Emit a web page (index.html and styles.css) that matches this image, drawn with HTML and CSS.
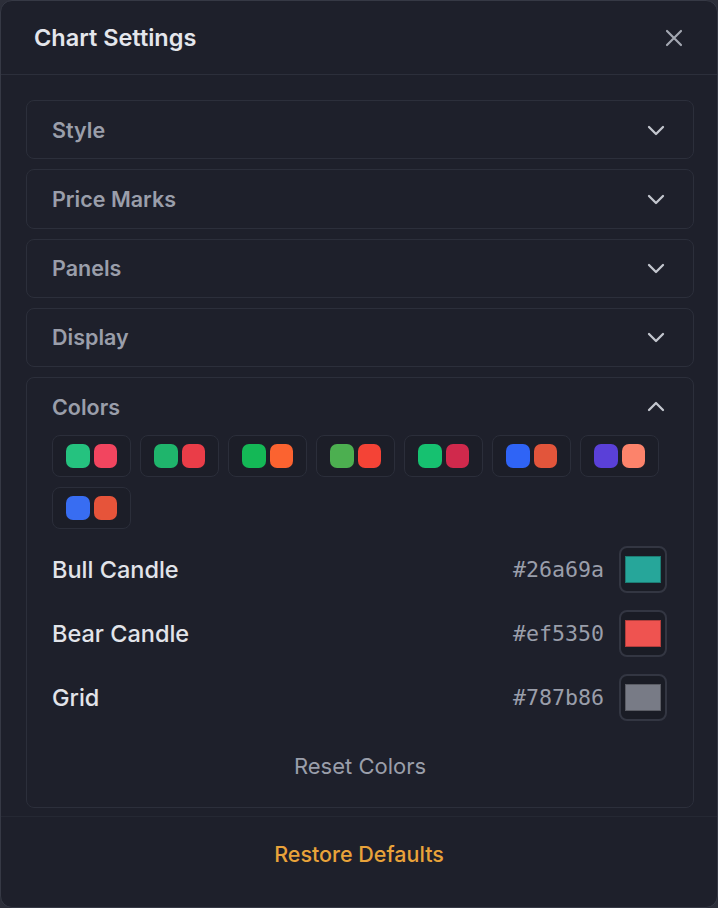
FILE: index.html
```html
<!DOCTYPE html>
<html lang="en">
<head>
  <meta charset="UTF-8">
  <meta name="viewport" content="width=device-width, initial-scale=1.0">
  <title>Chart Settings</title>
  <link rel="stylesheet" href="styles.css">
</head>
<body>
  <div class="modal">
    <header class="modal-head">
      <h2>Chart Settings</h2>
      <button class="close" aria-label="Close">
        <svg width="20" height="20" viewBox="0 0 20 20"><path d="M3 3 L17 17 M17 3 L3 17" /></svg>
      </button>
    </header>

    <div class="modal-body">
      <section class="group">
        <div class="group-head"><span>Style</span>
          <svg class="chev" width="20" height="20" viewBox="0 0 20 20"><path d="M3 7 L10 14 L17 7" /></svg>
        </div>
      </section>
      <section class="group">
        <div class="group-head"><span>Price Marks</span>
          <svg class="chev" width="20" height="20" viewBox="0 0 20 20"><path d="M3 7 L10 14 L17 7" /></svg>
        </div>
      </section>
      <section class="group">
        <div class="group-head"><span>Panels</span>
          <svg class="chev" width="20" height="20" viewBox="0 0 20 20"><path d="M3 7 L10 14 L17 7" /></svg>
        </div>
      </section>
      <section class="group">
        <div class="group-head"><span>Display</span>
          <svg class="chev" width="20" height="20" viewBox="0 0 20 20"><path d="M3 7 L10 14 L17 7" /></svg>
        </div>
      </section>

      <section class="group open">
        <div class="group-head"><span>Colors</span>
          <svg class="chev" width="20" height="20" viewBox="0 0 20 20"><path d="M3 13 L10 6 L17 13" /></svg>
        </div>
        <div class="group-body">
          <div class="presets">
            <button class="preset"><i style="background:#25c27f"></i><i style="background:#f2455f"></i></button>
            <button class="preset"><i style="background:#1fb56c"></i><i style="background:#ea3d48"></i></button>
            <button class="preset"><i style="background:#14b856"></i><i style="background:#fb6330"></i></button>
            <button class="preset"><i style="background:#4caf50"></i><i style="background:#f44336"></i></button>
            <button class="preset"><i style="background:#16c170"></i><i style="background:#d0294c"></i></button>
            <button class="preset"><i style="background:#2f64f6"></i><i style="background:#e2553b"></i></button>
            <button class="preset"><i style="background:#5a40d8"></i><i style="background:#fc836b"></i></button>
            <button class="preset"><i style="background:#386df2"></i><i style="background:#e6543a"></i></button>
          </div>

          <div class="color-rows">
            <div class="color-row">
              <span class="label">Bull Candle</span>
              <span class="hex">#26a69a</span>
              <span class="well"><i style="background:#26a69a"></i></span>
            </div>
            <div class="color-row">
              <span class="label">Bear Candle</span>
              <span class="hex">#ef5350</span>
              <span class="well"><i style="background:#ef5350"></i></span>
            </div>
            <div class="color-row">
              <span class="label">Grid</span>
              <span class="hex">#787b86</span>
              <span class="well"><i style="background:#787b86"></i></span>
            </div>
          </div>

          <button class="reset">Reset Colors</button>
        </div>
      </section>
    </div>

    <footer class="modal-foot">
      <button class="restore">Restore Defaults</button>
    </footer>
  </div>
</body>
</html>
```

FILE: styles.css
```css
* {
  box-sizing: border-box;
}

body {
  margin: 0;
  background: #2c2e39;
  font-family: Inter, "Noto Sans", sans-serif;
}

button {
  font-family: inherit;
  background: none;
  border: 0;
  padding: 0;
  cursor: pointer;
}

.modal {
  display: flex;
  flex-direction: column;
  height: 100vh;
  background: #1e202b;
  border: 1px solid #363945;
  border-radius: 12px;
  overflow: hidden;
}

.modal-head {
  display: flex;
  align-items: center;
  justify-content: space-between;
  height: 74px;
  padding: 0 33px;
  border-bottom: 1px solid #2c2f3b;
}

.modal-head h2 {
  margin: 0;
  font-size: 23.5px;
  font-weight: 600;
  color: #e4e6ec;
}

.close {
  display: flex;
}

.close svg path {
  fill: none;
  stroke: #a3a7b1;
  stroke-width: 2.2;
  stroke-linecap: round;
}

.modal-body {
  display: flex;
  flex-direction: column;
  gap: 10px;
  padding: 25px 23px 8px 25px;
}

.group {
  border: 1px solid #2c2f3b;
  border-radius: 8px;
}

.group-head {
  display: flex;
  align-items: center;
  justify-content: space-between;
  height: 57.25px;
  padding: 0 27px 0 25px;
  font-size: 21.5px;
  font-weight: 600;
  color: #9a9eaa;
}

.chev path {
  fill: none;
  stroke: #c3c6ce;
  stroke-width: 2.3;
  stroke-linecap: round;
  stroke-linejoin: round;
}

.group-body {
  padding: 0 25px 19px;
}

.presets {
  display: flex;
  flex-wrap: wrap;
  gap: 10px 9px;
}

.preset {
  display: flex;
  align-items: center;
  gap: 4px;
  width: 79px;
  height: 42px;
  padding: 0 13px;
  border: 1px solid #2b2e3a;
  border-radius: 8px;
  background: #1c1e28;
}

.preset i {
  width: 24px;
  height: 24px;
  border-radius: 7px;
}

.color-rows {
  display: flex;
  flex-direction: column;
  gap: 17px;
  margin-top: 17px;
}

.color-row {
  display: flex;
  align-items: center;
  height: 47px;
}

.label {
  flex: 1;
  font-size: 23.5px;
  font-weight: 500;
  color: #e2e4ea;
}

.hex {
  font-family: "DejaVu Sans Mono", "Liberation Mono", monospace;
  font-size: 21.6px;
  color: #9a9eaa;
  margin-right: 15px;
}

.well {
  display: flex;
  align-items: center;
  justify-content: center;
  width: 48px;
  height: 47px;
  margin-right: 1px;
  border: 2px solid #333642;
  border-radius: 8px;
  background: #1a1c25;
}

.well i {
  width: 36px;
  height: 27px;
  border: 1px solid rgba(0, 0, 0, 0.25);
}

.reset {
  display: block;
  width: 100%;
  height: 44px;
  margin-top: 23px;
  font-size: 22px;
  color: #9a9eaa;
}

.modal-foot {
  flex: 1;
  display: flex;
  justify-content: center;
  align-items: flex-start;
  padding-top: 22px;
  border-top: 1px solid #252833;
}

.restore {
  height: 30px;
  font-size: 21.5px;
  font-weight: 500;
  color: #e9a33a;
}
```
